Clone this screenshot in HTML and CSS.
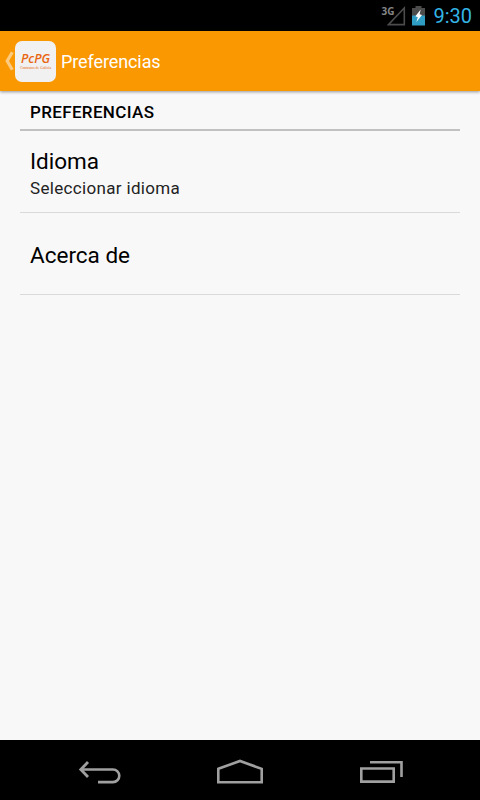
FILE: index.html
```html
<!DOCTYPE html>
<html lang="es">
<head>
    <meta charset="UTF-8">
    <meta name="viewport" content="width=device-width, initial-scale=1.0">
    <title>Preferencias</title>
    <link rel="stylesheet" href="styles.css">
</head>
<body>
    <div class="status-bar">
        <div class="signal">
            <span class="network">3G</span>
            <svg width="19" height="20" viewBox="0 0 19 20">
                <path d="M17.3 2 V18.6 H1.4 Z" fill="none" stroke="#4c4c4c" stroke-width="1.6"/>
            </svg>
        </div>
        <svg class="battery" width="13" height="20" viewBox="0 0 13 20">
            <path d="M0 2 H3.5 V0 H9.5 V2 H13 V10 H0 Z" fill="#4c4c4c"/>
            <path d="M0 9.5 H13 V19.5 H0 Z" fill="#2f9dc3"/>
            <path d="M8.7 3.6 L3.4 10.2 L5.8 11.2 L4.4 16 L10 9 L7.6 8.2 Z" fill="#fff"/>
        </svg>
        <span class="clock">9:30</span>
    </div>

    <div class="action-bar">
        <svg class="up" width="9" height="20" viewBox="0 0 9 20">
            <path d="M7.3 1.2 L2.2 10 L7.3 18.8" fill="none" stroke="#fccb7f" stroke-width="3.2"/>
        </svg>
        <div class="logo">
            <span class="logo-name">PcPG</span>
            <span class="logo-sub">Contratos de Galicia</span>
        </div>
        <h1>Preferencias</h1>
    </div>

    <div class="content">
        <h2>PREFERENCIAS</h2>
        <div class="item">
            <div class="item-title">Idioma</div>
            <div class="item-summary">Seleccionar idioma</div>
        </div>
        <div class="item">
            <div class="item-title">Acerca de</div>
        </div>
    </div>

    <div class="nav-bar">
        <svg width="44" height="24" viewBox="0 0 44 24">
            <path d="M3 9.5 H35 A6.3 6.3 0 0 1 35 22.1 H20" fill="none" stroke="#a0a0a0" stroke-width="2.6"/>
            <path d="M10 2 L2.8 9.5 L10 17" fill="none" stroke="#a0a0a0" stroke-width="2.8"/>
        </svg>
        <svg width="48" height="26" viewBox="0 0 48 26">
            <path d="M1.3 9.8 L23 2 L44.7 9.8 V23.3 H1.3 Z" fill="none" stroke="#a0a0a0" stroke-width="2.6"/>
        </svg>
        <svg width="44" height="24" viewBox="0 0 44 24">
            <path d="M1.3 8.5 H33.7 V21.6 H1.3 Z" fill="none" stroke="#a0a0a0" stroke-width="2.6"/>
            <path d="M10 2.3 H41.5 V17" fill="none" stroke="#a0a0a0" stroke-width="2.6"/>
        </svg>
    </div>
</body>
</html>
```
FILE: styles.css
```css
* {
    box-sizing: border-box;
}
body {
    display: flex;
    flex-direction: column;
    height: 100vh;
    margin: 0;
    background-color: #f8f8f8;
    font-family: Roboto, sans-serif;
    color: #000;
}
.status-bar {
    display: flex;
    justify-content: flex-end;
    align-items: flex-start;
    height: 31px;
    padding: 6px 8px 0 0;
    background-color: #000;
}
.signal {
    display: flex;
    align-items: flex-start;
    margin-right: 6px;
}
.network {
    margin-right: -7px;
    font-family: "Open Sans", sans-serif;
    font-size: 10px;
    font-weight: bold;
    line-height: 10px;
    color: #858585;
}
.battery {
    margin-right: 8px;
}
.clock {
    font-size: 20px;
    line-height: 21px;
    color: #33b5e5;
}
.action-bar {
    position: relative;
    display: flex;
    align-items: center;
    height: 60px;
    padding-left: 5px;
    background-color: #f99800;
    box-shadow: 0 1px 3px rgba(0, 0, 0, 0.4);
}
.up {
    margin-right: 1px;
}
.logo {
    display: flex;
    flex-direction: column;
    align-items: center;
    width: 41px;
    height: 41px;
    padding-top: 11px;
    border-radius: 7px;
    background-color: #f1f1f1;
    color: #e96410;
}
.logo-name {
    font-family: "Open Sans", sans-serif;
    font-size: 12.5px;
    font-style: italic;
    font-weight: 600;
    line-height: 14px;
}
.logo-sub {
    font-family: "Liberation Serif", serif;
    font-size: 3.8px;
    line-height: 5px;
    white-space: nowrap;
}
h1 {
    margin: 1px 0 0 5px;
    font-size: 18px;
    font-weight: normal;
    letter-spacing: -0.1px;
    color: #fff;
}
.content {
    flex: 1;
    padding: 0 20px;
}
h2 {
    height: 40px;
    margin: 0;
    padding: 11px 10px 0;
    border-bottom: 2px solid #c1c1c1;
    font-size: 17px;
    font-weight: 500;
    line-height: 20px;
    letter-spacing: 0.35px;
}
.item {
    display: flex;
    flex-direction: column;
    justify-content: center;
    height: 82px;
    padding: 6px 10px 0;
    border-bottom: 1px solid #dadada;
}
.item + .item {
    padding-top: 3px;
}
.item-title {
    font-size: 22.5px;
    line-height: 27px;
}
.item-summary {
    font-size: 17px;
    line-height: 26px;
    letter-spacing: 0.33px;
    color: #222;
}
.nav-bar {
    display: flex;
    justify-content: space-between;
    align-items: center;
    height: 60px;
    padding: 3px 76px 0 78px;
    background-color: #000;
}
```
